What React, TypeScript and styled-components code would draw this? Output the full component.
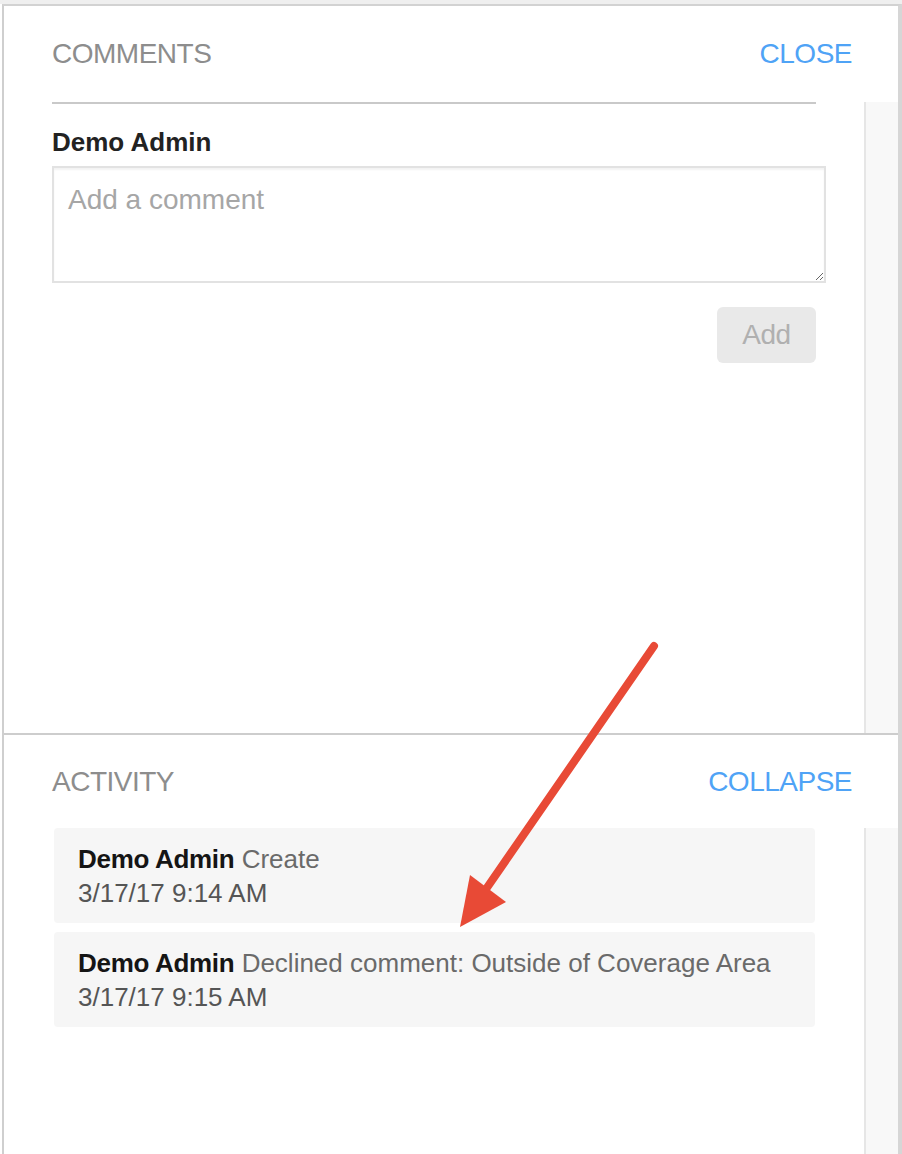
import React from "react"
import styled, {createGlobalStyle} from "styled-components"

const GlobalStyle = createGlobalStyle`
  html, body {
    margin: 0;
    padding: 0;
    background: #fff;
    font-family: "Liberation Sans", Arial, sans-serif;
  }
  * { box-sizing: border-box; }
`

const Frame = styled.div`
  position: relative;
  height: 1154px;
  border-top: 4px solid #efefef;
  padding-left: 2px;
  overflow: hidden;
`

const Panel = styled.div`
  display: flex;
  flex-direction: column;
  height: 100%;
  border-top: 2px solid #d2d2d2;
  border-left: 2px solid #cfcfcf;
  border-right: 4px solid #d6d6d6;
  background: #fff;
`

const Section = styled.section<{divider?: boolean; grow?: boolean}>`
  display: flex;
  flex-direction: column;
  flex: ${(p) => (p.grow ? "1 1 auto" : "0 0 auto")};
  border-top: ${(p) => (p.divider ? "2px solid #cdcdcd" : "none")};
  min-height: 0;
`

const Header = styled.div<{h: number}>`
  display: flex;
  align-items: center;
  justify-content: space-between;
  height: ${(p) => p.h}px;
  padding: 0 46px 0 48px;
`

const Title = styled.div`
  font-size: 28px;
  color: #8d8d8d;
  letter-spacing: -0.5px;
`

const Link = styled.a`
  font-size: 28px;
  color: #4fa3f6;
  letter-spacing: -0.5px;
  cursor: pointer;
`

const Body = styled.div<{h?: number}>`
  display: flex;
  flex: ${(p) => (p.h ? `0 0 ${p.h}px` : "1 1 auto")};
  min-height: 0;
`

const Content = styled.div`
  flex: 1 1 auto;
`

const Track = styled.div`
  flex: 0 0 34px;
  background: #f8f8f8;
  border-left: 2px solid #e6e6e6;
`

const Form = styled.div`
  display: flex;
  flex-direction: column;
  margin: 0 48px;
  border-top: 2px solid #c9c9c9;
  padding-top: 22px;
`

const Author = styled.div`
  font-size: 26px;
  font-weight: 700;
  color: #222;
  line-height: 32px;
`

const Input = styled.textarea`
  width: calc(100% + 10px);
  height: 117px;
  margin-top: 8px;
  padding: 16px 14px;
  border: 2px solid #e2e2e2;
  box-shadow: inset 0 2px 2px rgba(0, 0, 0, 0.05);
  font-family: "Liberation Sans", Arial, sans-serif;
  font-size: 28px;
  color: #333;
  resize: both;
  outline: none;

  &::placeholder {
    color: #a6a6a6;
  }
`

const Actions = styled.div`
  display: flex;
  justify-content: flex-end;
  margin-top: 24px;
`

const AddButton = styled.button`
  width: 99px;
  height: 56px;
  border: none;
  border-radius: 6px;
  background: #e9e9e9;
  color: #b0b0b0;
  font-family: "Liberation Sans", Arial, sans-serif;
  font-size: 28px;
  letter-spacing: -0.5px;
`

const List = styled.div`
  display: flex;
  flex-direction: column;
  gap: 9px;
  padding: 0 49px 0 50px;
`

const Card = styled.div`
  background: #f6f6f6;
  border-radius: 4px;
  padding: 14px 24px 13px;
  font-size: 26px;
  line-height: 34px;
`

const Name = styled.span`
  font-weight: 700;
  color: #151515;
  letter-spacing: -0.3px;
`

const Action = styled.span`
  color: #6a6a6a;
`

const When = styled.div`
  color: #555;
`

const Arrow = styled.svg`
  position: absolute;
  left: 0;
  top: 0;
  pointer-events: none;
`

const activity = [
  {name: "Demo Admin", action: "Create", when: "3/17/17 9:14 AM"},
  {
    name: "Demo Admin",
    action: "Declined comment: Outside of Coverage Area",
    when: "3/17/17 9:15 AM"
  }
]

export default function App() {
  return (
    <Frame>
      <GlobalStyle />
      <Panel>
        <Section>
          <Header h={96}>
            <Title>COMMENTS</Title>
            <Link>CLOSE</Link>
          </Header>
          <Body h={631}>
            <Content>
              <Form>
                <Author>Demo Admin</Author>
                <Input placeholder="Add a comment" />
                <Actions>
                  <AddButton disabled>Add</AddButton>
                </Actions>
              </Form>
            </Content>
            <Track />
          </Body>
        </Section>
        <Section divider grow>
          <Header h={93}>
            <Title>ACTIVITY</Title>
            <Link>COLLAPSE</Link>
          </Header>
          <Body>
            <Content>
              <List>
                {activity.map((a, i) => (
                  <Card key={i}>
                    <div>
                      <Name>{a.name}</Name> <Action>{a.action}</Action>
                    </div>
                    <When>{a.when}</When>
                  </Card>
                ))}
              </List>
            </Content>
            <Track />
          </Body>
        </Section>
      </Panel>
      <Arrow width="902" height="1154" viewBox="0 0 902 1154">
        <line x1="654" y1="642" x2="484" y2="888" stroke="#e84a36" strokeWidth="8" strokeLinecap="round" />
        <polygon points="460,923 470,871 506,898" fill="#e84a36" />
      </Arrow>
    </Frame>
  )
}
